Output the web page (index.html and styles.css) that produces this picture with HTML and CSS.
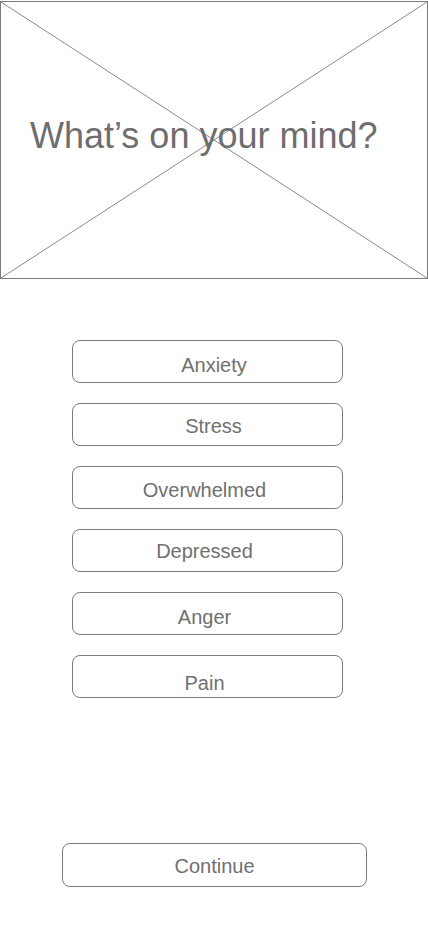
FILE: index.html
```html
<!DOCTYPE html>
<html lang="en">
<head>
<meta charset="utf-8">
<title>What's on your mind?</title>
<link rel="stylesheet" href="styles.css">
</head>
<body>
<div class="screen">
  <header class="hero">
    <svg class="hero-x" viewBox="0 0 100 100" preserveAspectRatio="none" aria-hidden="true">
      <line x1="0" y1="0" x2="100" y2="100" vector-effect="non-scaling-stroke"/>
      <line x1="100" y1="0" x2="0" y2="100" vector-effect="non-scaling-stroke"/>
    </svg>
    <h1 class="hero-title">What’s on your mind?</h1>
  </header>

  <div class="options">
    <button class="option opt-anxiety">Anxiety</button>
    <button class="option opt-stress">Stress</button>
    <button class="option opt-overwhelmed">Overwhelmed</button>
    <button class="option opt-depressed">Depressed</button>
    <button class="option opt-anger">Anger</button>
    <button class="option opt-pain">Pain</button>
  </div>

  <div class="footer">
    <button class="continue">Continue</button>
  </div>
</div>
</body>
</html>
```
FILE: styles.css
```css
* { box-sizing: border-box; }
html, body { margin: 0; padding: 0; background: #fff; }
body {
  font-family: "Liberation Sans", Arial, Helvetica, sans-serif;
  color: #707070;
}
.screen {
  width: 428px;
  min-height: 926px;
  padding-top: 1px;
  display: flex;
  flex-direction: column;
}
.hero {
  position: relative;
  height: 278px;
  border: 1px solid #7a7a7a;
  display: flex;
  align-items: center;
  padding-left: 29px;
}
.hero-x {
  position: absolute;
  inset: 0;
  width: 100%;
  height: 100%;
}
.hero-x line {
  stroke: #8a8a8a;
  stroke-width: 1;
}
.hero-title {
  position: relative;
  margin: 0;
  margin-top: -8px;
  font-weight: normal;
  font-size: 36px;
  line-height: 42px;
  color: #6e6e6e;
}
.options {
  margin-top: 61px;
  padding-left: 72px;
  display: flex;
  flex-direction: column;
  gap: 20px;
}
.option, .continue {
  font-family: inherit;
  color: #707070;
  background: #fff;
  border: 1px solid #7a7a7a;
  border-radius: 8px;
  display: flex;
  align-items: center;
  justify-content: center;
  padding: 0;
  margin: 0;
  font-size: 20px;
  line-height: 23px;
}
.option {
  width: 271px;
  height: 43px;
}
.opt-anxiety { padding-top: 7px; padding-left: 13px; }
.opt-stress { padding-top: 3px; padding-left: 12px; }
.opt-overwhelmed { padding-top: 6px; padding-right: 6px; }
.opt-depressed { padding-top: 2px; padding-right: 6px; }
.opt-anger { padding-top: 7px; padding-right: 6px; }
.opt-pain { padding-top: 14px; padding-right: 6px; }
.footer {
  margin-top: 145px;
  padding-left: 62px;
}
.continue {
  width: 305px;
  height: 44px;
  padding-top: 3px;
}
```
